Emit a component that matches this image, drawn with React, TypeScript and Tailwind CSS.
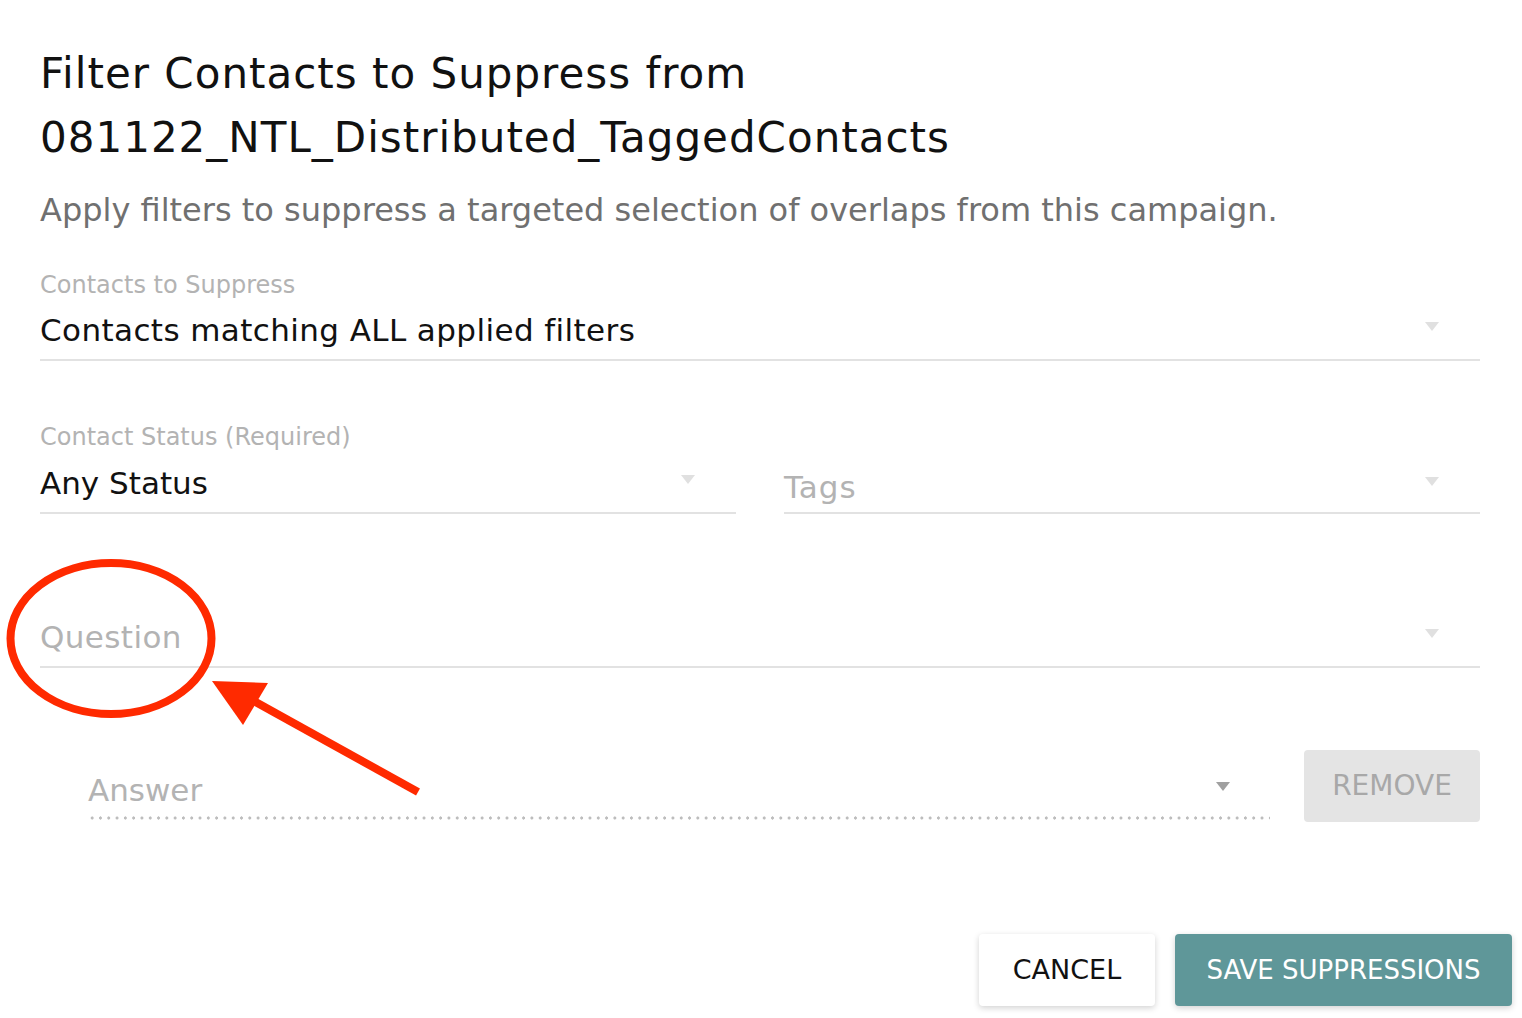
import React from 'react';

const Caret = ({ dark }: { dark?: boolean }) => (
  <svg width="14" height="10" viewBox="0 0 14 10" className="shrink-0 -translate-y-[3px]">
    <path d="M0 0 L14 0 L7 9 Z" fill={dark ? '#a0a0a0' : '#e0e0e0'} />
  </svg>
);

const Annotation = () => (
  <svg className="absolute inset-0 pointer-events-none" width="1522" height="1018" viewBox="0 0 1522 1018">
    <ellipse cx="111" cy="638.5" rx="100.5" ry="75.5" fill="none" stroke="#ff2a00" strokeWidth="8" />
    <line x1="418" y1="792" x2="252" y2="700" stroke="#ff2a00" strokeWidth="8" />
    <polygon points="212,681 268,683 243,725" fill="#ff2a00" />
  </svg>
);

export default function App() {
  return (
    <div className="relative w-[1522px] h-[1018px] bg-white overflow-hidden font-['DejaVu_Sans',sans-serif]">
      <div className="flex flex-col pl-10 pr-[42px] pt-[42px]">
        <h1 className="text-[42px] leading-[64px] tracking-[1px] text-[#111] font-normal">
          Filter Contacts to Suppress from
          <br />
          081122_NTL_Distributed_TaggedContacts
        </h1>
        <p className="mt-[16px] text-[32px] leading-[48px] text-[#707070]">
          Apply filters to suppress a targeted selection of overlaps from this campaign.
        </p>

        <div className="mt-9 flex flex-col">
          <span className="text-[24px] leading-[30px] text-[#b3b3b3]">Contacts to Suppress</span>
          <div className="mt-2 flex items-center justify-between pb-[7px] border-b-2 border-[#e2e2e2] pr-[41px]">
            <span className="text-[31px] leading-[44px] tracking-[0.4px] text-[#111]">
              Contacts matching ALL applied filters
            </span>
            <Caret />
          </div>
        </div>

        <div className="mt-[61px] flex gap-12">
          <div className="flex-1 flex flex-col">
            <span className="text-[24px] leading-[30px] text-[#b3b3b3]">Contact Status (Required)</span>
            <div className="mt-[9px] flex items-center justify-between pb-[7px] border-b-2 border-[#e2e2e2] pr-[41px]">
              <span className="text-[31px] leading-[44px] text-[#111]">Any Status</span>
              <Caret />
            </div>
          </div>
          <div className="flex-1 flex flex-col justify-end">
            <div className="flex items-center justify-between pb-[5px] border-b-2 border-[#e2e2e2] pr-[41px]">
              <span className="text-[31px] leading-[44px] tracking-[1px] text-[#b3b3b3] translate-y-[2px]">Tags</span>
              <Caret />
            </div>
          </div>
        </div>

        <div className="mt-[101px] flex items-center justify-between pb-[7px] border-b-2 border-[#e2e2e2] pr-[41px]">
          <span className="text-[31px] leading-[44px] tracking-[0.4px] text-[#b3b3b3]">Question</span>
          <Caret />
        </div>

        <div className="mt-[82px] flex items-end gap-[34px] pl-12">
          <div className="flex-1 flex flex-col">
            <div className="flex items-center justify-between pr-[40px]">
              <span className="text-[31px] leading-[44px] text-[#b3b3b3]">Answer</span>
              <Caret dark />
            </div>
            <div className="mt-[4px] mb-[2px] h-[4px] bg-[radial-gradient(circle,#bdbdbd_1.4px,transparent_1.8px)] bg-[length:8.3px_4px] bg-repeat-x" />
          </div>
          <button className="w-[176px] h-[72px] rounded bg-[#e4e4e4] text-[28px] text-[#a8a8a8]">
            REMOVE
          </button>
        </div>

        <div className="mt-[112px] -mr-[32px] flex justify-end gap-5">
          <button className="w-[176px] h-[72px] rounded bg-white text-[27px] text-[#111] shadow-[0_2px_6px_rgba(0,0,0,0.18)]">
            CANCEL
          </button>
          <button className="w-[337px] h-[72px] rounded bg-[#5f9799] text-[26px] text-white shadow-[0_2px_6px_rgba(0,0,0,0.18)]">
            SAVE SUPPRESSIONS
          </button>
        </div>
      </div>
      <Annotation />
    </div>
  );
}
